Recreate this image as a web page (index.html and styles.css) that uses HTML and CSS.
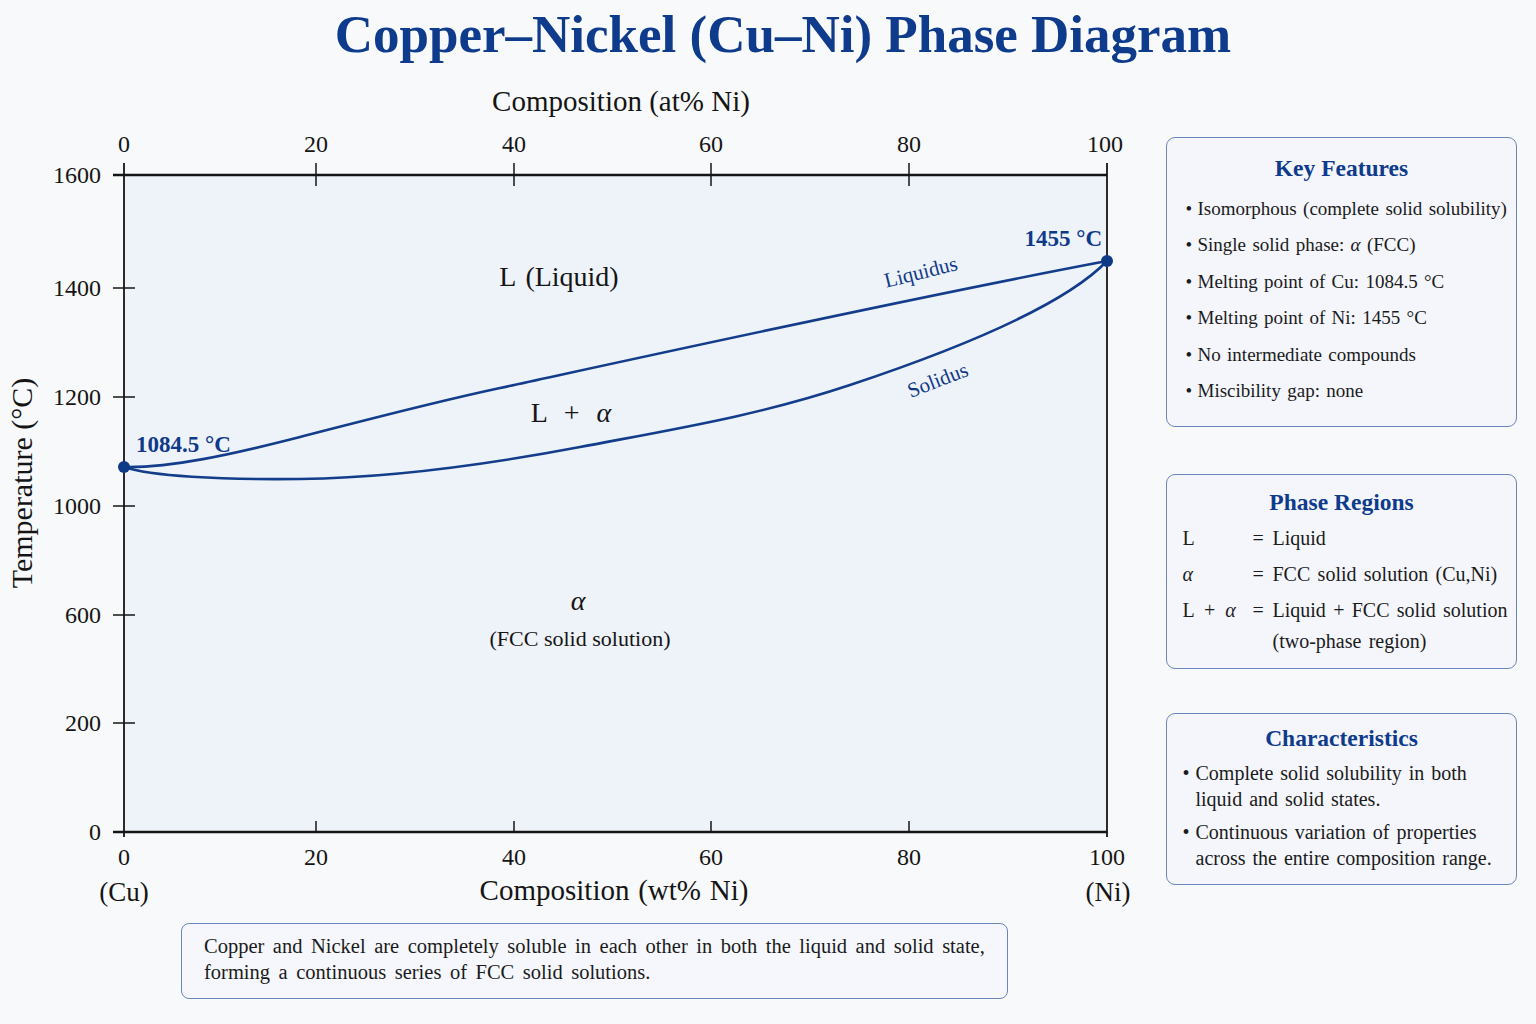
FILE: index.html
```html
<!DOCTYPE html>
<html lang="en">
<head>
<meta charset="utf-8">
<title>Copper–Nickel (Cu–Ni) Phase Diagram</title>
<link rel="stylesheet" href="styles.css">
</head>
<body>
<h1 class="title">Copper–Nickel (Cu–Ni) Phase Diagram</h1>
<div class="layout">
  <div class="chart-col">
    <svg class="plot" viewBox="0 80 1150 830" width="1150" height="830" xmlns="http://www.w3.org/2000/svg">
      <text class="axis-title" x="621" y="111" text-anchor="middle">Composition (at% Ni)</text>
      <g class="tick-label" text-anchor="middle">
        <text x="124" y="152">0</text>
        <text x="316" y="152">20</text>
        <text x="514" y="152">40</text>
        <text x="711" y="152">60</text>
        <text x="909" y="152">80</text>
        <text x="1105" y="152">100</text>
      </g>
      <rect class="plot-bg" x="124" y="175" width="983" height="657"/>
      <g class="axis">
        <line class="axis-h" x1="113" y1="175" x2="1107" y2="175"/>
        <line class="axis-h" x1="113" y1="832" x2="1107" y2="832"/>
        <line class="axis-v" x1="124" y1="163" x2="124" y2="837"/>
        <line class="axis-v" x1="1107" y1="163" x2="1107" y2="837"/>
        <line class="tick" x1="113" y1="288" x2="135" y2="288"/>
        <line class="tick" x1="113" y1="397" x2="135" y2="397"/>
        <line class="tick" x1="113" y1="506" x2="135" y2="506"/>
        <line class="tick" x1="113" y1="615" x2="135" y2="615"/>
        <line class="tick" x1="113" y1="723" x2="135" y2="723"/>
        <line class="tick" x1="316" y1="163" x2="316" y2="186"/>
        <line class="tick" x1="514" y1="163" x2="514" y2="186"/>
        <line class="tick" x1="711" y1="163" x2="711" y2="186"/>
        <line class="tick" x1="909" y1="163" x2="909" y2="186"/>
        <line class="tick" x1="316" y1="821" x2="316" y2="832"/>
        <line class="tick" x1="514" y1="821" x2="514" y2="832"/>
        <line class="tick" x1="711" y1="821" x2="711" y2="832"/>
        <line class="tick" x1="909" y1="821" x2="909" y2="832"/>
      </g>
      <g class="tick-label" text-anchor="end">
        <text x="101" y="183">1600</text>
        <text x="101" y="296">1400</text>
        <text x="101" y="405">1200</text>
        <text x="101" y="514">1000</text>
        <text x="101" y="623">600</text>
        <text x="101" y="731">200</text>
        <text x="101" y="840">0</text>
      </g>
      <g class="tick-label" text-anchor="middle">
        <text x="124" y="865">0</text>
        <text x="316" y="865">20</text>
        <text x="514" y="865">40</text>
        <text x="711" y="865">60</text>
        <text x="909" y="865">80</text>
        <text x="1107" y="865">100</text>
      </g>
      <text class="end-label" x="124" y="901" text-anchor="middle">(Cu)</text>
      <text class="end-label" x="1108" y="901" text-anchor="middle">(Ni)</text>
      <text class="axis-title axis-title--wide" x="614" y="900" text-anchor="middle">Composition (wt% Ni)</text>
      <text class="axis-title axis-title--temp" transform="translate(32,483) rotate(-90)" text-anchor="middle">Temperature (°C)</text>

      <path class="curve" d="M124,467 C170,468 230,455 300,437 C370,419 430,403 500,388 C620,362 900,300 1107,261"/>
      <path class="curve" d="M124,467 C150,476 220,480 300,479 C380,478 480,466 580,447 C680,428 760,415 850,385 C940,355 1060,310 1107,261"/>
      <circle class="dot" cx="124" cy="467" r="6"/>
      <circle class="dot" cx="1107" cy="261" r="6"/>

      <text class="temp-label" x="136" y="452">1084.5 °C</text>
      <text class="temp-label" x="1102" y="246" text-anchor="end">1455 °C</text>
      <text class="curve-label" transform="translate(921,273) rotate(-14)" y="6" text-anchor="middle">Liquidus</text>
      <text class="curve-label" transform="translate(938,381) rotate(-21)" y="6" text-anchor="middle">Solidus</text>

      <text class="region" x="559" y="286" text-anchor="middle">L (Liquid)</text>
      <text class="region region--sum" x="571" y="422" text-anchor="middle">L  +  <tspan class="greek">α</tspan></text>
      <text class="region greek" x="578" y="610" text-anchor="middle">α</text>
      <text class="region-sub" x="580" y="646" text-anchor="middle">(FCC solid solution)</text>
    </svg>
    <div class="note">Copper and Nickel are completely soluble in each other in both the liquid and solid state,<br>forming a continuous series of FCC solid solutions.</div>
  </div>

  <aside class="sidebar">
    <section class="card card--features">
      <h2 class="card-title">Key Features</h2>
      <ul class="list list--features">
        <li><span class="bullet">•</span><span>Isomorphous (complete solid solubility)</span></li>
        <li><span class="bullet">•</span><span>Single solid phase: <i class="greek">α</i> (FCC)</span></li>
        <li><span class="bullet">•</span><span>Melting point of Cu: 1084.5 °C</span></li>
        <li><span class="bullet">•</span><span>Melting point of Ni: 1455 °C</span></li>
        <li><span class="bullet">•</span><span>No intermediate compounds</span></li>
        <li><span class="bullet">•</span><span>Miscibility gap: none</span></li>
      </ul>
    </section>
    <section class="card card--regions">
      <h2 class="card-title">Phase Regions</h2>
      <div class="regions">
        <span>L</span><span>=</span><span>Liquid</span>
        <span><i class="greek">α</i></span><span>=</span><span>FCC solid solution (Cu,Ni)</span>
        <span class="sym-sum">L + <i class="greek">α</i></span><span>=</span><span>Liquid + FCC solid solution (two-phase region)</span>
      </div>
    </section>
    <section class="card card--chars">
      <h2 class="card-title">Characteristics</h2>
      <ul class="list list--chars">
        <li><span class="bullet">•</span><span>Complete solid solubility in both liquid and solid states.</span></li>
        <li><span class="bullet">•</span><span>Continuous variation of properties across the entire composition range.</span></li>
      </ul>
    </section>
  </aside>
</div>
</body>
</html>
```

FILE: styles.css
```css
html, body {
  margin: 0;
  padding: 0;
}
body {
  width: 1536px;
  height: 1024px;
  overflow: hidden;
  background: #f8f9fb;
  font-family: "Liberation Serif", "Times New Roman", serif;
  color: #1b1b1b;
}
.title {
  margin: 0;
  height: 80px;
  padding-left: 30px;
  line-height: 68px;
  text-align: center;
  font-size: 53px;
  font-weight: bold;
  color: #0e3b8c;
}
.layout {
  display: flex;
  align-items: flex-start;
}
.chart-col {
  width: 1150px;
  flex: none;
}
.plot {
  display: block;
  font-family: "Liberation Serif", "Times New Roman", serif;
}
.plot-bg {
  fill: #eef2f9;
}
.axis-h {
  stroke: #151515;
  stroke-width: 2.4;
}
.axis-v {
  stroke: #151515;
  stroke-width: 1.8;
}
.tick {
  stroke: #151515;
  stroke-width: 1.5;
}
.tick-label {
  font-size: 24px;
  fill: #151515;
}
.axis-title {
  font-size: 29px;
  fill: #151515;
}
.axis-title--wide {
  word-spacing: 1.5px;
}
.axis-title--temp {
  font-size: 30px;
}
.end-label {
  font-size: 27px;
  fill: #151515;
}
.curve {
  fill: none;
  stroke: #133d8b;
  stroke-width: 2.6;
  stroke-linecap: round;
}
.dot {
  fill: #0f3a88;
}
.temp-label {
  font-size: 23px;
  font-weight: bold;
  fill: #0f3a88;
}
.curve-label {
  font-size: 21px;
  fill: #0f3a88;
}
.region {
  font-size: 28px;
  fill: #151515;
  white-space: pre;
  word-spacing: 3px;
}
.region--sum {
  word-spacing: 1.5px;
}
.region-sub {
  font-size: 22px;
  fill: #151515;
}
.greek {
  font-style: italic;
}
.note {
  margin: 13px 0 0 181px;
  width: 827px;
  box-sizing: border-box;
  border: 1.5px solid #6a86bd;
  border-radius: 8px;
  background: #f5f7fc;
  padding: 9px 10px 13px 22px;
  font-size: 20.5px;
  word-spacing: 3.4px;
  line-height: 26px;
  white-space: nowrap;
  color: #1b1b1b;
}
.sidebar {
  margin-left: 16px;
  width: 351px;
  flex: none;
  padding-top: 57px;
  display: flex;
  flex-direction: column;
}
.card {
  box-sizing: border-box;
  border: 1.5px solid #6a86bd;
  border-radius: 9px;
  background: #f4f6fb;
}
.card-title {
  margin: 0;
  font-size: 23.5px;
  font-weight: bold;
  line-height: 30px;
  text-align: center;
  color: #0e3b8c;
}
.list {
  list-style: none;
  margin: 0;
  padding: 0;
}
.list li {
  display: flex;
}
.card--features {
  height: 290px;
  padding-top: 15px;
}
.list--features {
  margin-top: 7.5px;
  padding-left: 18.5px;
  font-size: 19px;
  word-spacing: 1.6px;
  line-height: 36.6px;
  white-space: nowrap;
}
.list--features .bullet {
  width: 12px;
  flex: none;
}
.card--regions {
  height: 195px;
  margin-top: 47px;
  padding-top: 12px;
}
.regions {
  margin-top: 6px;
  padding: 0 6px 0 15.5px;
  display: grid;
  grid-template-columns: 70px 20px 1fr;
  row-gap: 5px;
  font-size: 20px;
  word-spacing: 2.3px;
  line-height: 31px;
}
.sym-sum {
  word-spacing: 5px;
}
.card--chars {
  height: 172px;
  margin-top: 44px;
  padding-top: 9px;
}
.list--chars {
  margin-top: 7px;
  padding: 0 8px 0 15.5px;
  font-size: 20px;
  word-spacing: 2px;
  line-height: 26px;
}
.list--chars li + li {
  margin-top: 7px;
}
.list--chars .bullet {
  width: 13px;
  flex: none;
}
```
